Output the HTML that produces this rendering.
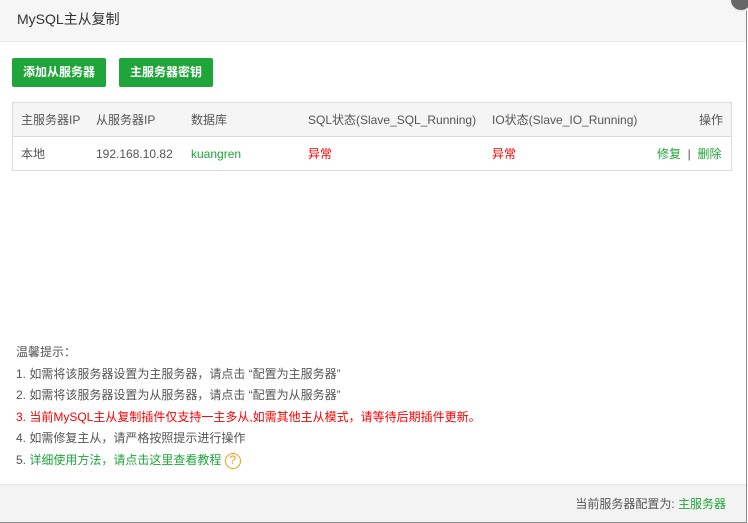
<!DOCTYPE html>
<html><head><meta charset="utf-8"><style>
*{margin:0;padding:0;box-sizing:border-box}
body{width:748px;height:523px;background:#fff;font-family:"Liberation Sans","Noto Sans CJK SC",sans-serif;font-size:12px;color:#555;position:relative;overflow:hidden}
.win{position:absolute;left:0;top:0;width:747px;height:523px;border-right:1px solid #8a8a8a;border-bottom:1px solid #8a8a8a;background:#fff}
.hd{position:absolute;left:0;top:0;width:746px;height:42px;background:#f6f6f6;border-bottom:1px solid #e8e8e8;font-size:14px;color:#333;padding:0 0 0 17px;line-height:38px}
.close{position:absolute;left:729px;top:-12px;width:24px;height:24px;border-radius:50%;background:#666;border:2px solid #eee}
.btn{position:absolute;top:58px;height:29px;background:#20a53a;color:#fff;border-radius:2px;font-size:12px;font-weight:bold;line-height:29px;text-align:center}
.tbl{position:absolute;left:12px;top:102px;width:720px;height:69px;border:1px solid #ddd}
.th{position:absolute;left:0;top:0;width:718px;height:34px;background:#f5f5f5;border-bottom:1px solid #ddd}
.c{position:absolute;white-space:nowrap;line-height:16px;height:16px}
.c *{vertical-align:top}
.tips{position:absolute;left:16px;top:342px;line-height:21.6px}
.ft{position:absolute;left:0;top:484px;width:746px;height:38px;background:#f4f3f3;border-top:1px solid #e6e6e6}
.g{color:#20a53a}.r{color:#f00}
</style></head><body>
<div class="win">
<div class="hd">MySQL主从复制</div>
<div class="close"></div>
<div class="btn" style="left:12px;width:94px">添加从服务器</div>
<div class="btn" style="left:119px;width:94px">主服务器密钥</div>
<div class="tbl">
<div class="th"></div>
<span class="c" style="left:8px;top:9px">主服务器IP</span>
<span class="c" style="left:83px;top:9px">从服务器IP</span>
<span class="c" style="left:178px;top:9px">数据库</span>
<span class="c" style="left:295px;top:9px">SQL状态(Slave_SQL_Running)</span>
<span class="c" style="left:479px;top:9px">IO状态(Slave_IO_Running)</span>
<span class="c" style="left:686px;top:9px">操作</span>
<span class="c" style="left:8px;top:43px">本地</span>
<span class="c" style="left:83px;top:43px">192.168.10.82</span>
<span class="c g" style="left:178px;top:43px">kuangren</span>
<span class="c r" style="left:295px;top:43px">异常</span>
<span class="c r" style="left:479px;top:43px">异常</span>
<span class="c" style="left:644px;top:43px"><span class="g">修复</span> &nbsp;|&nbsp; <span class="g">删除</span></span>
</div>
<div class="tips">
<div>温馨提示：</div>
<div>1. 如需将该服务器设置为主服务器，请点击 “配置为主服务器”</div>
<div>2. 如需将该服务器设置为从服务器，请点击 “配置为从服务器”</div>
<div class="r">3. 当前MySQL主从复制插件仅支持一主多从,如需其他主从模式，请等待后期插件更新。</div>
<div>4. 如需修复主从，请严格按照提示进行操作</div>
<div>5. <span class="g">详细使用方法，请点击这里查看教程</span> <span style="display:inline-block;width:16px;height:16px;border:1.5px solid #f39c12;border-radius:50%;color:#f39c12;text-align:center;line-height:13px;font-size:12px;vertical-align:middle">?</span></div>
</div>
<div class="ft"><span class="c" style="right:20px;top:11px">当前服务器配置为: <span class="g">主服务器</span></span></div>
</div>
</body></html>
